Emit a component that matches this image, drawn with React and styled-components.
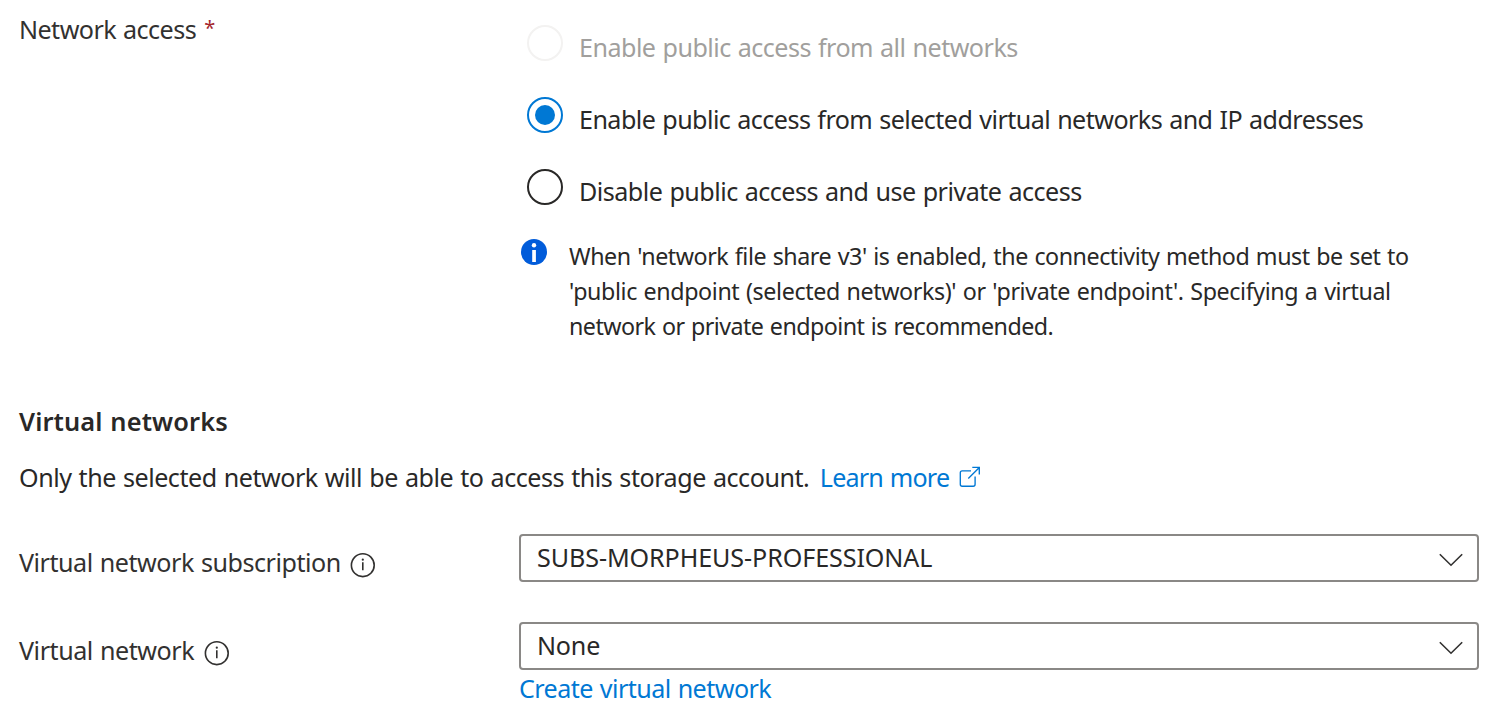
import React from "react";
import styled, { createGlobalStyle } from "styled-components";

const GlobalStyle = createGlobalStyle`
  *, *::before, *::after { box-sizing: border-box; }
  body {
    margin: 0;
    background: #fff;
    color: #292827;
    font-family: "Noto Sans", "Open Sans", sans-serif;
    font-size: 25.1px;
    line-height: 36px;
    word-spacing: 1px;
  }
`;

const Page = styled.main`
  width: 1501px;
  height: 720px;
  padding: 11px 22px 0 19px;
  overflow: hidden;
`;

const Text = styled.span`
  letter-spacing: ${(p) => p.$track || 0}px;
  white-space: nowrap;
`;

const FormRow = styled.section`
  display: grid;
  grid-template-columns: 500px 960px;
`;

const Label = styled.div`
  display: flex;
  align-items: flex-start;
  gap: ${(p) => p.$gap || 9.5}px;
  padding-top: ${(p) => p.$top || 0}px;
  color: #323130;
`;

const Required = styled.span`
  color: #a4262c;
  font-size: 20px;
  line-height: 34px;
`;

const RadioGroup = styled.div`
  display: flex;
  flex-direction: column;
  gap: 36px;
  padding: 14px 0 0 8px;
`;

const RadioOption = styled.label`
  display: flex;
  gap: 16px;
  height: 36px;
  color: ${(p) => (p.$disabled ? "#a19f9d" : "#292827")};
`;

const RadioCircle = styled.span`
  display: grid;
  place-items: center;
  flex: none;
  width: 36px;
  height: 36px;
  border: 2px solid ${(p) => (p.$disabled ? "#f3f2f1" : p.$checked ? "#0078d4" : "#292827")};
  border-radius: 50%;
`;

const RadioDot = styled.span`
  width: 20px;
  height: 20px;
  border-radius: 50%;
  background: #0078d4;
`;

const RadioText = styled(Text)`
  padding-top: 4px;
`;

const Notice = styled.div`
  display: flex;
  gap: 22px;
  padding: 34px 0 0 2px;
  font-size: 23.25px;
  line-height: 35px;
`;

const NoticeIcon = styled.svg`
  flex: none;
  width: 26px;
  height: 26px;
`;

const NoticeBody = styled.div`
  display: flex;
  flex-direction: column;
`;

const Heading = styled.h2`
  margin: 59px 0 0;
  font-size: 25.4px;
  font-weight: 600;
  line-height: 36px;
`;

const Description = styled.p`
  display: flex;
  gap: 10.5px;
  margin: 20px 0 0;
`;

const Link = styled.a`
  display: flex;
  align-items: flex-start;
  gap: 10px;
  color: #0078d4;
`;

const ExternalIcon = styled.svg`
  width: 22px;
  height: 22px;
  margin-top: 7px;
`;

const InfoIcon = styled.svg`
  flex: none;
  width: 26px;
  height: 26px;
  margin-top: 8px;
`;

const Fields = styled.div`
  display: flex;
  flex-direction: column;
  gap: 40px;
  margin-top: 39px;
`;

const SelectBox = styled.div`
  display: flex;
  justify-content: space-between;
  width: 960px;
  height: 48px;
  padding: 3px 14px 0 16px;
  border: 2px solid #8a8886;
  border-radius: 4px;
`;

const Chevron = styled.svg`
  width: 24px;
  height: 14px;
  margin-top: 14px;
`;

function Radio({ label, track, checked, disabled }) {
  return (
    <RadioOption $disabled={disabled}>
      <RadioCircle $checked={checked} $disabled={disabled}>
        {checked && <RadioDot />}
      </RadioCircle>
      <RadioText $track={track}>{label}</RadioText>
    </RadioOption>
  );
}

function Info() {
  return (
    <InfoIcon viewBox="0 0 26 26" fill="none">
      <circle cx="12.8" cy="13.2" r="11.4" stroke="#323130" strokeWidth="1.6" />
      <path d="M12.8 10.3v8" stroke="#323130" strokeWidth="1.6" />
      <circle cx="12.8" cy="7.7" r="1.1" fill="#323130" />
    </InfoIcon>
  );
}

function Select({ value, track }) {
  return (
    <SelectBox>
      <Text $track={track}>{value}</Text>
      <Chevron viewBox="0 0 24 14" fill="none">
        <path d="M.8 1.2l11.2 11 11.2-11" stroke="#323130" strokeWidth="1.6" />
      </Chevron>
    </SelectBox>
  );
}

export default function App() {
  return (
    <>
      <GlobalStyle />
      <Page>
        <FormRow>
          <Label $gap={8}>
            <Text $track={-0.55}>Network access</Text>
            <Required>*</Required>
          </Label>
          <div>
            <RadioGroup>
              <Radio label="Enable public access from all networks" track={-0.52} disabled />
              <Radio
                label="Enable public access from selected virtual networks and IP addresses"
                track={-0.55}
                checked
              />
              <Radio label="Disable public access and use private access" track={-0.51} />
            </RadioGroup>
            <Notice>
              <NoticeIcon viewBox="0 0 26 26">
                <circle cx="13" cy="13" r="13" fill="#015cda" />
                <circle cx="13" cy="6.3" r="2.2" fill="#fff" />
                <path d="M11.2 11h3.7v12h-3.7z" fill="#fff" />
              </NoticeIcon>
              <NoticeBody>
                <Text $track={-0.465}>
                  When 'network file share v3' is enabled, the connectivity method must be set to
                </Text>
                <Text $track={-0.39}>
                  'public endpoint (selected networks)' or 'private endpoint'. Specifying a virtual
                </Text>
                <Text $track={-0.55}>network or private endpoint is recommended.</Text>
              </NoticeBody>
            </Notice>
          </div>
        </FormRow>
        <Heading>
          <Text $track={0.12}>Virtual networks</Text>
        </Heading>
        <Description>
          <Text $track={-0.47}>
            Only the selected network will be able to access this storage account.
          </Text>
          <Link>
            <Text $track={-0.8}>Learn more</Text>
            <ExternalIcon viewBox="0 0 22 22" fill="none" stroke="#0078d4" strokeWidth="1.35">
              <path d="M12 4.8H3.2Q1.3 4.8 1.3 6.7v11.6q0 1.9 1.9 1.9h11q1.9 0 1.9-1.9V10.5M9.3 12.4L20.3 1.4M13.3 1.4h7v7" />
            </ExternalIcon>
          </Link>
        </Description>
        <Fields>
          <FormRow>
            <Label $top={10}>
              <Text $track={-0.47}>Virtual network subscription</Text>
              <Info />
            </Label>
            <Select value="SUBS-MORPHEUS-PROFESSIONAL" track={-0.08} />
          </FormRow>
          <FormRow>
            <Label $top={10}>
              <Text $track={-0.45}>Virtual network</Text>
              <Info />
            </Label>
            <div>
              <Select value="None" track={-0.2} />
              <Link>
                <Text $track={-0.55}>Create virtual network</Text>
              </Link>
            </div>
          </FormRow>
        </Fields>
      </Page>
    </>
  );
}
